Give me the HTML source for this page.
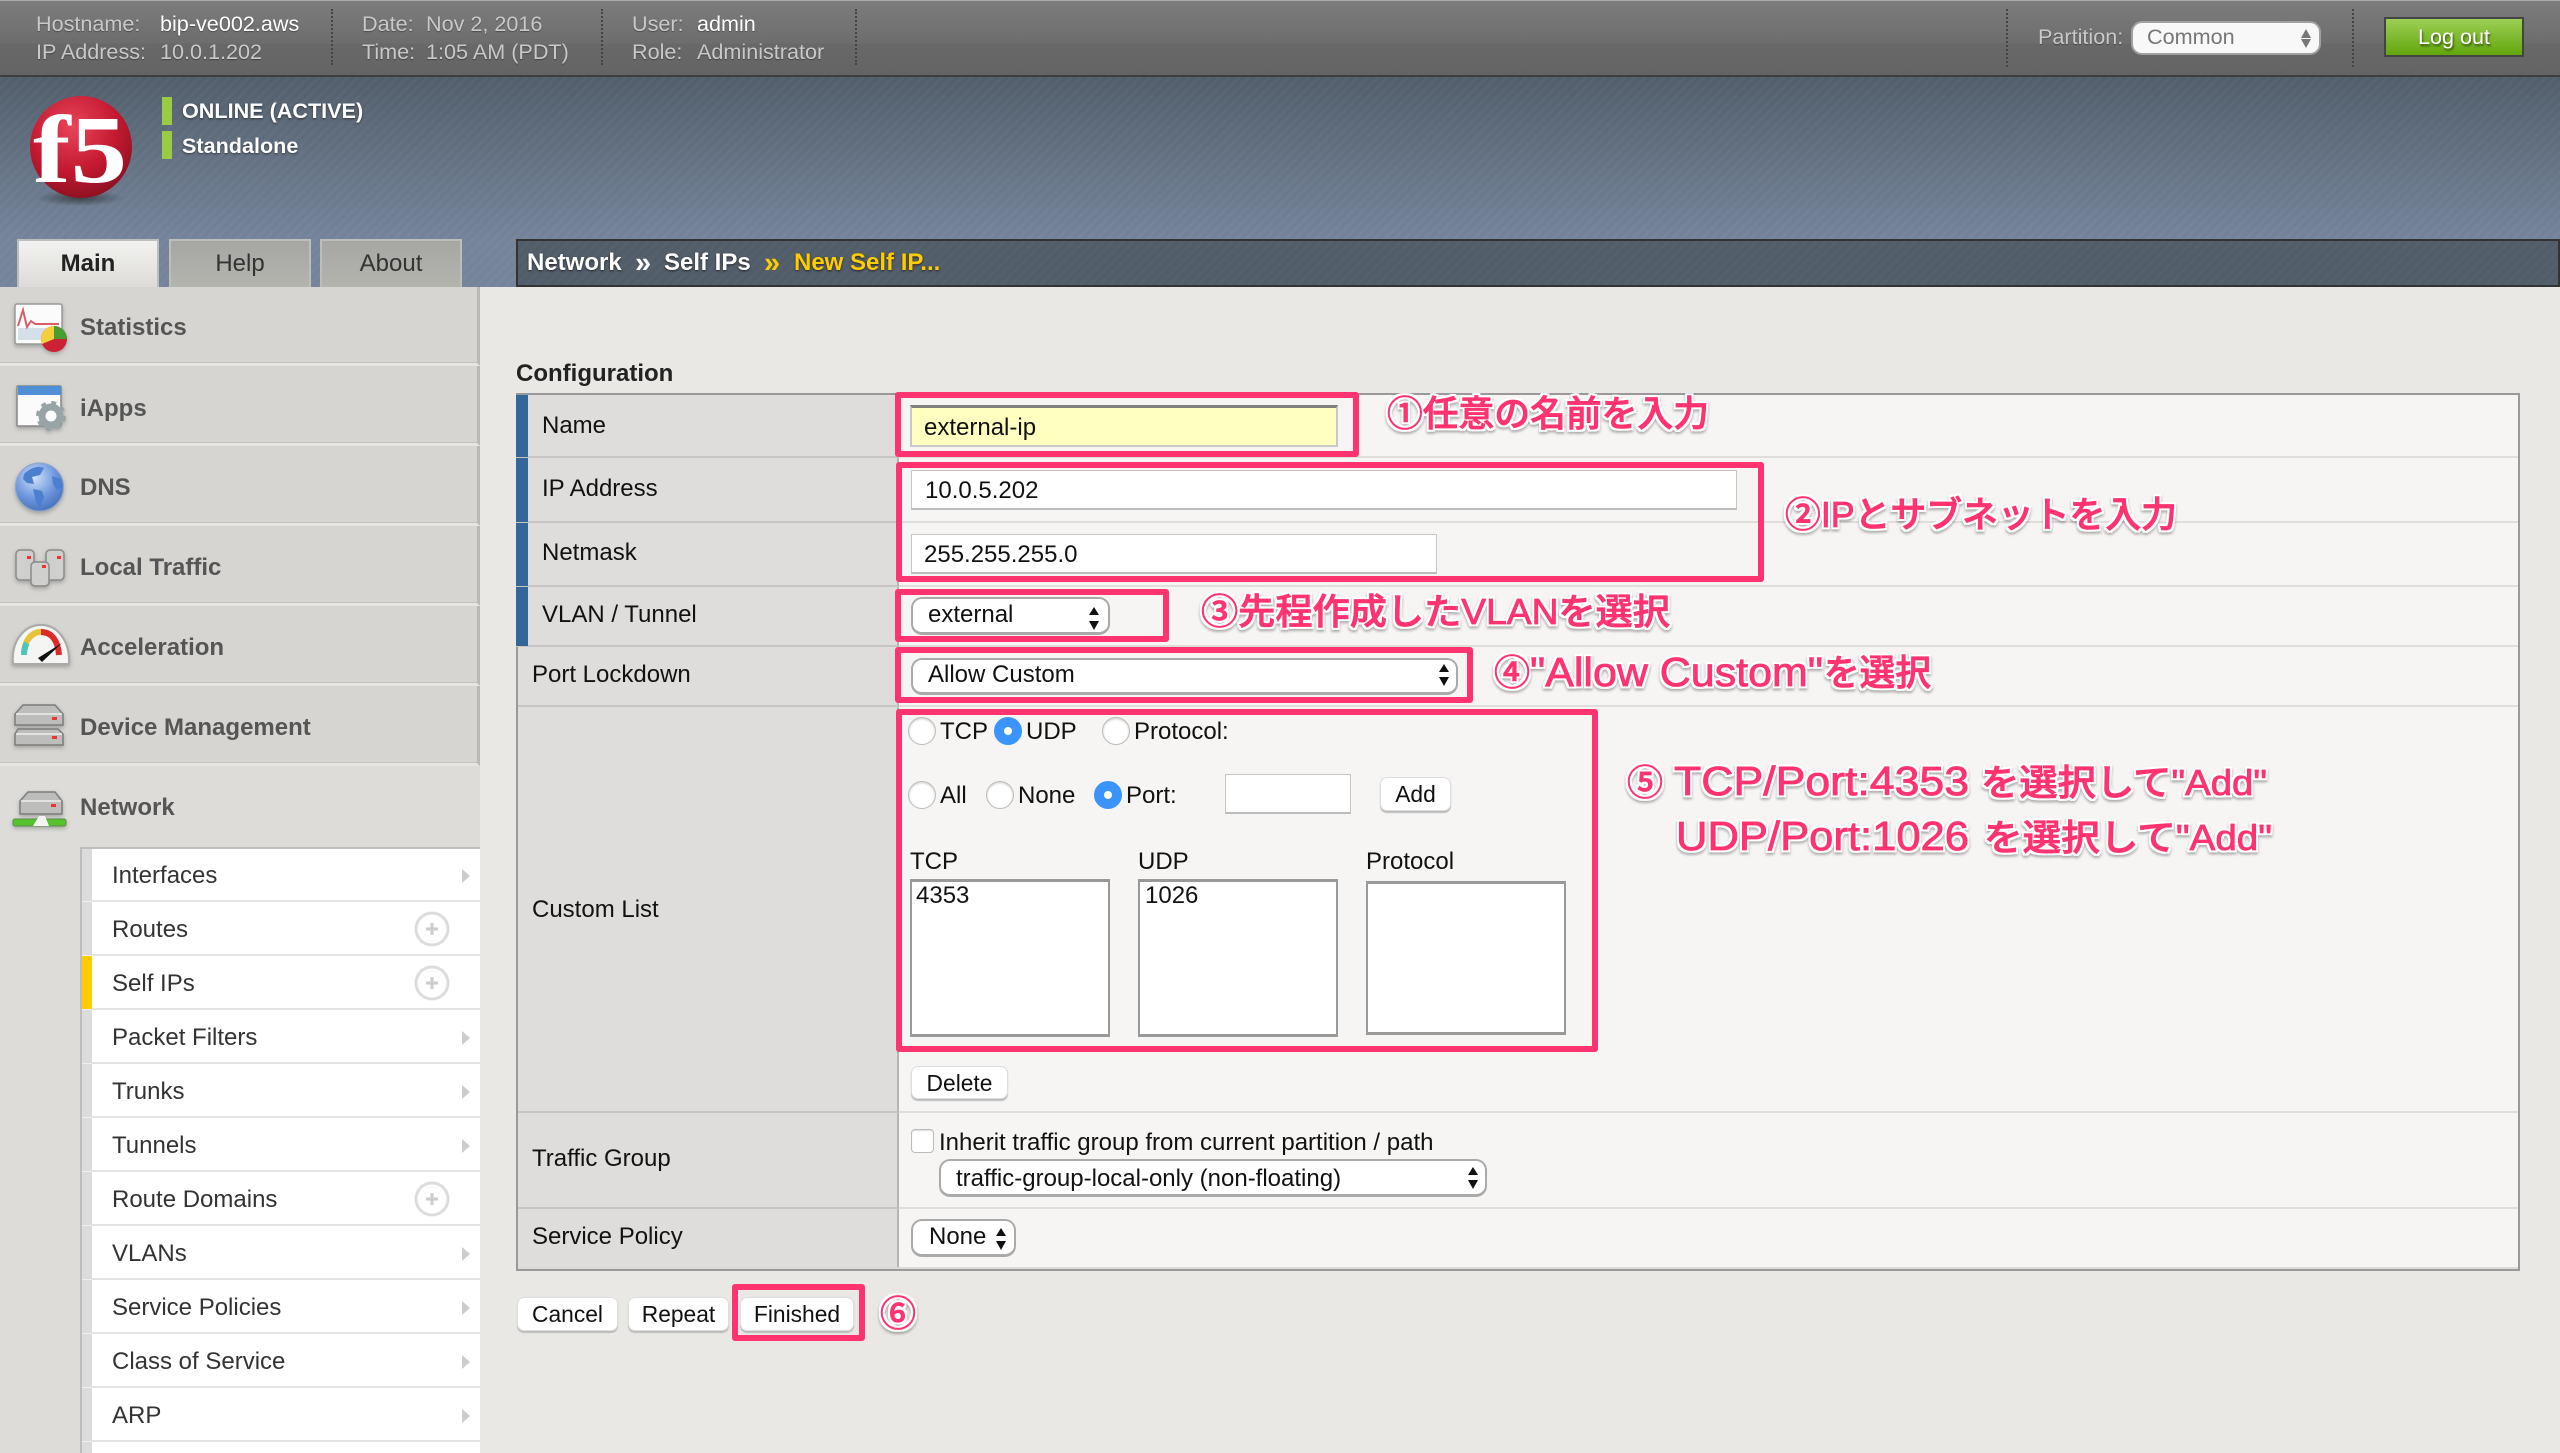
<!DOCTYPE html>
<html lang="ja"><head><meta charset="utf-8"><title>BIG-IP New Self IP</title>
<style>
html,body{margin:0;padding:0}
body{width:2560px;height:1453px;overflow:hidden;position:relative;background:#e9e8e4;font-family:"Liberation Sans","Noto Sans CJK JP",sans-serif;font-size:24px;color:#111}
div,span.a{position:absolute;box-sizing:border-box}
.t{white-space:nowrap;height:24px;line-height:24px;margin-top:1px}
.h{font-size:21.6px;color:#c9c9c9;text-shadow:0 1px 1px rgba(0,0,0,.35);margin-top:0}
.w{color:#fff}
.side{left:0;width:480px;height:80px;background:#d6d5d1;border-bottom:3px solid #e6e5e2;border-right:3px solid #b9b9b6;box-shadow:inset 0 -1px 0 #c4c3bf}
.sl{left:80px;font-weight:bold;color:#555;margin-top:2px}
.sub{left:92px;width:388px;height:54px;background:#fff;border-bottom:2px solid #e4e4e4}
.sst{left:82px;width:10px;height:54px;background:#dcdcdc;border-bottom:1px solid #eee}
.st{left:112px;color:#333;margin-top:2px}
.arr{left:462px;width:0;height:0;border-left:8px solid #ccc;border-top:7px solid transparent;border-bottom:7px solid transparent}
.lc{left:518px;width:381px;background:#dedddb;border-bottom:2px solid #c6c5c1;border-right:2px solid #b5b5b2}
.rc{left:899px;width:1619px;background:#f6f5f3;border-bottom:2px solid #dfdedb}
.blue{left:516px;width:12px;background:#336699;border-bottom:1px solid #c6c5c1}
.in{background:#fff;border:1px solid #c6c6c6;border-bottom:2px solid #bbb}
.sel{background:#fff;border:2px solid #aaa;border-bottom-width:3px;border-radius:11px}
.btn{background:#fff;border:1px solid #ddd;border-radius:7px;box-shadow:0 2px 1px #bbb;text-align:center;font-size:22.8px;line-height:33px;color:#111}
.rad{width:28px;height:28px;border-radius:50%;background:#fff;border:1px solid #bbb;box-shadow:inset 0 1px 2px #ccc}
.on{background:#3a94fb;border-color:#3a94fb;box-shadow:none}
.on:after{content:"";position:absolute;left:9px;top:9px;width:8px;height:8px;background:#fff;border-radius:50%}
.lst{background:#fff;border:2px solid #999;border-top-width:3px;border-bottom-width:3px}
.pk{border:6px solid #ff3370;border-radius:3px}
.tab{top:239px;height:48px;width:142px;border:2px solid #bdbdb9;border-bottom:0;background:linear-gradient(#a6a7a3,#b3b4ae);text-align:center;line-height:45px;color:#333}
.ann{font-family:"Liberation Sans","Noto Sans CJK JP",sans-serif;font-size:36px;font-weight:500;fill:#ff3370;stroke:#ff3370;stroke-width:.8px;filter:url(#halo)}
.lat{font-size:41px;font-weight:400}
</style></head><body>

<!-- top bar -->
<div style="left:0;top:0;width:2560px;height:77px;background:linear-gradient(#7c7c7c 2%,#6d6d6d 57%,#686868 58%,#646464);border-top:1px solid #aaa;border-bottom:2px solid #3e3e3e"></div>
<div style="left:331px;top:9px;width:0;height:56px;border-left:2px dotted #444"></div>
<div style="left:601px;top:9px;width:0;height:56px;border-left:2px dotted #444"></div>
<div style="left:855px;top:9px;width:0;height:56px;border-left:2px dotted #444"></div>
<div style="left:2006px;top:9px;width:0;height:58px;border-left:2px dotted #444"></div>
<div style="left:2352px;top:9px;width:0;height:58px;border-left:2px dotted #444"></div>
<div class="t h" style="left:36px;top:12px">Hostname:</div><div class="t h w" style="left:160px;top:12px">bip-ve002.aws</div>
<div class="t h" style="left:36px;top:40px">IP Address:</div><div class="t h" style="left:160px;top:40px">10.0.1.202</div>
<div class="t h" style="left:362px;top:12px">Date:</div><div class="t h" style="left:426px;top:12px">Nov 2, 2016</div>
<div class="t h" style="left:362px;top:40px">Time:</div><div class="t h" style="left:426px;top:40px">1:05 AM (PDT)</div>
<div class="t h" style="left:632px;top:12px">User:</div><div class="t h w" style="left:697px;top:12px">admin</div>
<div class="t h" style="left:632px;top:40px">Role:</div><div class="t h" style="left:697px;top:40px">Administrator</div>
<div class="t h" style="left:2038px;top:25px">Partition:</div>
<div style="left:2131px;top:21px;width:190px;height:34px;background:#f8f8f8;border:2px solid #a0a0a0;border-radius:11px"></div>
<div class="t" style="left:2147px;top:25px;margin-top:0;font-size:21.6px;color:#777">Common</div>
<div style="left:2384px;top:17px;width:140px;height:40px;background:linear-gradient(#9ccf55,#62a60c);border:2px solid #444"></div>
<div class="t" style="left:2384px;width:140px;top:25px;margin-top:0;text-align:center;font-size:21.6px;color:#fff;text-shadow:1px 2px 2px rgba(0,0,0,.55)">Log out</div>

<!-- header band -->
<div style="left:0;top:77px;width:2560px;height:210px;background:repeating-linear-gradient(135deg,rgba(255,255,255,.018) 0 3px,rgba(0,0,0,.012) 3px 7px),linear-gradient(#535f6c,#75859b 77%,#75859b)"></div>
<div style="left:162px;top:97px;width:10px;height:28px;background:#9c4"></div>
<div style="left:162px;top:131px;width:10px;height:28px;background:#9c4"></div>
<div class="t" style="left:182px;top:98px;font-size:21.6px;font-weight:bold;color:#fff;text-shadow:0 1px 2px rgba(0,0,0,.5)">ONLINE (ACTIVE)</div>
<div class="t" style="left:182px;top:133px;font-size:21.6px;font-weight:bold;color:#fff;text-shadow:0 1px 2px rgba(0,0,0,.5)">Standalone</div>

<!-- f5 logo -->
<svg style="position:absolute;left:20px;top:90px" width="124" height="124" viewBox="20 90 124 124">
<defs>
<radialGradient id="rd" cx=".42" cy=".3" r=".8"><stop offset="0" stop-color="#e8455a"/><stop offset=".55" stop-color="#c3182f"/><stop offset="1" stop-color="#7d0f1d"/></radialGradient>
<radialGradient id="sh"><stop offset="0" stop-color="#222" stop-opacity=".65"/><stop offset="1" stop-color="#222" stop-opacity="0"/></radialGradient>
<radialGradient id="gl" cx=".4" cy=".3" r=".8"><stop offset="0" stop-color="#cfe0f8"/><stop offset=".55" stop-color="#6c96dd"/><stop offset="1" stop-color="#3e68b5"/></radialGradient>
</defs>
<ellipse cx="80" cy="198" rx="44" ry="8" fill="url(#sh)"/>
<ellipse cx="81" cy="147" rx="51" ry="51" fill="url(#rd)"/>
<text x="33" y="182" font-family="Liberation Serif" font-weight="bold" font-size="96" fill="#fff" textLength="94" lengthAdjust="spacingAndGlyphs">f5</text>
</svg>

<!-- tabs -->
<div class="tab" style="left:17px;width:142px;background:linear-gradient(#f2f2f0,#dddcd8);font-weight:bold;color:#222">Main</div>
<div class="tab" style="left:169px">Help</div>
<div class="tab" style="left:320px">About</div>
<div style="left:516px;top:239px;width:2044px;height:48px;background:repeating-linear-gradient(135deg,rgba(255,255,255,.018) 0 3px,transparent 3px 7px),#525d6a;border:2px solid #333"></div>
<div class="t" style="left:527px;top:250px;font-weight:bold;color:#fff;text-shadow:0 1px 2px #222">Network</div>
<div class="t" style="left:635px;top:250px;font-weight:bold;font-size:29px;color:#fff">»</div>
<div class="t" style="left:664px;top:250px;font-weight:bold;color:#fff;text-shadow:0 1px 2px #222">Self IPs</div>
<div class="t" style="left:764px;top:250px;font-weight:bold;font-size:29px;color:#fc0">»</div>
<div class="t" style="left:794px;top:250px;font-weight:bold;color:#fc0;text-shadow:0 1px 2px #222">New Self IP...</div>

<!-- sidebar -->
<div style="left:0;top:287px;width:480px;height:1166px;background:#dddcd8"></div>
<div class="side" style="top:287px;height:79px"></div>
<div class="side" style="top:366px"></div>
<div class="side" style="top:446px"></div>
<div class="side" style="top:526px"></div>
<div class="side" style="top:606px"></div>
<div class="side" style="top:686px"></div>
<div class="t sl" style="top:314px">Statistics</div>
<div class="t sl" style="top:395px">iApps</div>
<div class="t sl" style="top:474px">DNS</div>
<div class="t sl" style="top:554px">Local Traffic</div>
<div class="t sl" style="top:634px">Acceleration</div>
<div class="t sl" style="top:714px">Device Management</div>
<div class="t sl" style="top:794px">Network</div>

<svg style="position:absolute;left:0;top:290px;filter:drop-shadow(0 2px 2px rgba(0,0,0,.25))" width="90" height="560" viewBox="0 290 90 560">
<!-- statistics -->
<rect x="15" y="304" width="47" height="40" rx="2" fill="#fbfbfb" stroke="#999" stroke-width="1.5"/>
<rect x="18" y="328" width="41" height="12" fill="#d4dfe9"/>
<path d="M18 326L23 310 27 327 31 321 35 324 59 324" fill="none" stroke="#d5606a" stroke-width="2"/>
<circle cx="54" cy="339" r="13" fill="#cc2236"/>
<path d="M54 339L54 326A13 13 0 0 1 67 339Z" fill="#4a9d33"/>
<path d="M54 339L54 326A13 13 0 0 0 42 344Z" fill="#f2cf3c"/>
<!-- iApps -->
<rect x="17" y="386" width="44" height="40" rx="1" fill="#fbfbfb" stroke="#888" stroke-width="1.5"/>
<rect x="18" y="386" width="43" height="9" fill="#4f8fd6"/>
<circle cx="51" cy="416" r="9" fill="none" stroke="#98a4a6" stroke-width="7"/>
<circle cx="51" cy="416" r="13.500" fill="none" stroke="#98a4a6" stroke-width="3" stroke-dasharray="5 5.600"/>
<!-- DNS -->
<circle cx="39.500" cy="487" r="24" fill="url(#gl)" stroke="#8ea6c8"/>
<path d="M24 474c6-6 14-9 20-6l-4 7-8 2 2 7-7-1-4-4zM33 489l9 2 2 6-4 11-4-6zM52 476l9 3 2 8-6 3-4-6z" fill="#4d7fd0"/>
<!-- Local traffic -->
<g fill="#cfcfcd" stroke="#8a8a8a" stroke-width="1.5">
<rect x="16" y="550" width="18" height="30" rx="4"/><rect x="46" y="550" width="18" height="30" rx="4"/><rect x="31" y="562" width="18" height="24" rx="4"/>
</g>
<g fill="#e33"><rect x="27" y="556" width="4" height="3"/><rect x="57" y="556" width="4" height="3"/><rect x="42" y="565" width="4" height="3"/></g>
<!-- Acceleration -->
<path d="M13 664c-2-24 12-39 28-39s29 15 28 39z" fill="#f5f5f3" stroke="#aaa" stroke-width="2"/>
<path d="M24 655c0-15 8-23 17-23" fill="none" stroke="#e8c23c" stroke-width="6"/>
<path d="M24 655c0-5 1-9 3-12" fill="none" stroke="#4cc5bd" stroke-width="6"/>
<path d="M41 632c11 0 17 9 18 23" fill="none" stroke="#dc2b26" stroke-width="6"/>
<path d="M38 658L62 643 42 662z" fill="#111"/>
<!-- Device Mgmt -->
<g fill="#bdbdbb" stroke="#7d7d7d" stroke-width="1.500">
<path d="M15 725v-11l8-9h32l8 9v11z"/><path d="M15 745v-11l3-5h40l5 5v11z"/>
</g>
<path d="M16 714h46M16 734h46" stroke="#eee" stroke-width="1.5"/>
<g fill="#e33"><rect x="52" y="717" width="5" height="3"/><rect x="52" y="736" width="5" height="3"/></g>
<!-- Network -->
<path d="M20 814v-13l8-9h27l7 9v13z" fill="#bdbdbb" stroke="#7d7d7d" stroke-width="1.5"/>
<path d="M21 801h40" stroke="#eee" stroke-width="1.500"/>
<rect x="51" y="804" width="5" height="3" fill="#e33"/>
<rect x="13" y="819" width="53" height="7" rx="2" fill="#55c32e" stroke="#5d8c4a"/>
<path d="M33 826l6-10 6 0 4 10z" fill="#f4f4f4"/>
</svg>

<!-- sub menu -->
<div style="left:80px;top:847px;width:400px;height:2px;background:#bdbdbb"></div>
<div style="left:80px;top:847px;width:2px;height:606px;background:#bdbdbb"></div>
<div class="sub" style="top:849px;height:53px"></div><div class="sst" style="top:849px;height:53px"></div>
<div class="sub" style="top:902px"></div><div class="sst" style="top:902px"></div>
<div class="sub" style="top:956px"></div><div class="sst" style="top:956px;background:#fc0"></div>
<div class="sub" style="top:1010px"></div><div class="sst" style="top:1010px"></div>
<div class="sub" style="top:1064px"></div><div class="sst" style="top:1064px"></div>
<div class="sub" style="top:1118px"></div><div class="sst" style="top:1118px"></div>
<div class="sub" style="top:1172px"></div><div class="sst" style="top:1172px"></div>
<div class="sub" style="top:1226px"></div><div class="sst" style="top:1226px"></div>
<div class="sub" style="top:1280px"></div><div class="sst" style="top:1280px"></div>
<div class="sub" style="top:1334px"></div><div class="sst" style="top:1334px"></div>
<div class="sub" style="top:1388px"></div><div class="sst" style="top:1388px"></div>
<div class="sub" style="top:1442px;height:11px;border:0"></div><div class="sst" style="top:1442px;height:11px;border:0"></div>
<div class="t st" style="top:862px">Interfaces</div><div class="arr" style="top:869px"></div>
<div class="t st" style="top:916px">Routes</div>
<div class="t st" style="top:970px">Self IPs</div>
<div class="t st" style="top:1024px">Packet Filters</div><div class="arr" style="top:1031px"></div>
<div class="t st" style="top:1078px">Trunks</div><div class="arr" style="top:1085px"></div>
<div class="t st" style="top:1132px">Tunnels</div><div class="arr" style="top:1139px"></div>
<div class="t st" style="top:1186px">Route Domains</div>
<div class="t st" style="top:1240px">VLANs</div><div class="arr" style="top:1247px"></div>
<div class="t st" style="top:1294px">Service Policies</div><div class="arr" style="top:1301px"></div>
<div class="t st" style="top:1348px">Class of Service</div><div class="arr" style="top:1355px"></div>
<div class="t st" style="top:1402px">ARP</div><div class="arr" style="top:1409px"></div>
<svg style="position:absolute;left:410px;top:900px" width="44" height="320" viewBox="410 900 44 320">
<g fill="#fff" stroke="#ddd" stroke-width="3"><circle cx="432" cy="929" r="16"/><circle cx="432" cy="983" r="16"/><circle cx="432" cy="1199" r="16"/></g>
<g stroke="#ccc" stroke-width="3"><path d="M426 929h12M432 923v12M426 983h12M432 977v12M426 1199h12M432 1193v12"/></g>
</svg>

<!-- main config -->
<div class="t" style="left:516px;top:361px;font-weight:bold;color:#222">Configuration</div>
<div style="left:516px;top:393px;width:2004px;height:878px;border:2px solid #999;background:#f6f5f3"></div>
<div class="lc" style="top:395px;height:63px"></div><div class="rc" style="top:395px;height:63px"></div>
<div class="lc" style="top:458px;height:65px"></div><div class="rc" style="top:458px;height:65px"></div>
<div class="lc" style="top:523px;height:64px"></div><div class="rc" style="top:523px;height:64px"></div>
<div class="lc" style="top:587px;height:60px"></div><div class="rc" style="top:587px;height:60px"></div>
<div class="lc" style="top:647px;height:60px"></div><div class="rc" style="top:647px;height:60px"></div>
<div class="lc" style="top:707px;height:406px"></div><div class="rc" style="top:707px;height:406px"></div>
<div class="lc" style="top:1113px;height:96px"></div><div class="rc" style="top:1113px;height:96px"></div>
<div class="lc" style="top:1209px;height:60px;border-bottom-color:#d8d7d4"></div><div class="rc" style="top:1209px;height:60px"></div>
<div class="blue" style="top:395px;height:63px"></div><div class="blue" style="top:458px;height:65px"></div><div class="blue" style="top:523px;height:64px"></div><div class="blue" style="top:587px;height:60px"></div>
<div class="t" style="left:542px;top:413px">Name</div>
<div class="t" style="left:542px;top:476px">IP Address</div>
<div class="t" style="left:542px;top:540px">Netmask</div>
<div class="t" style="left:542px;top:602px">VLAN / Tunnel</div>
<div class="t" style="left:532px;top:662px">Port Lockdown</div>
<div class="t" style="left:532px;top:897px">Custom List</div>
<div class="t" style="left:532px;top:1146px">Traffic Group</div>
<div class="t" style="left:532px;top:1224px">Service Policy</div>

<div style="left:910px;top:405px;width:428px;height:42px;background:#ffffc0;border:2px solid #c8c8c8;border-top:3px solid #808080"></div>
<div class="t" style="left:924px;top:415px">external-ip</div>
<div class="in" style="left:911px;top:470px;width:826px;height:40px"></div>
<div class="t" style="left:925px;top:478px">10.0.5.202</div>
<div class="in" style="left:911px;top:534px;width:526px;height:40px"></div>
<div class="t" style="left:924px;top:542px">255.255.255.0</div>
<div class="sel" style="left:911px;top:597px;width:199px;height:38px"></div>
<div class="t" style="left:928px;top:602px">external</div>
<div class="sel" style="left:911px;top:658px;width:547px;height:37px"></div>
<div class="t" style="left:928px;top:662px">Allow Custom</div>

<div class="rad" style="left:908px;top:717px"></div><div class="t" style="left:940px;top:719px">TCP</div>
<div class="rad on" style="left:994px;top:717px"></div><div class="t" style="left:1026px;top:719px">UDP</div>
<div class="rad" style="left:1102px;top:717px"></div><div class="t" style="left:1134px;top:719px">Protocol:</div>
<div class="rad" style="left:908px;top:781px"></div><div class="t" style="left:940px;top:783px">All</div>
<div class="rad" style="left:986px;top:781px"></div><div class="t" style="left:1018px;top:783px">None</div>
<div class="rad on" style="left:1094px;top:781px"></div><div class="t" style="left:1126px;top:783px">Port:</div>
<div class="in" style="left:1225px;top:774px;width:126px;height:40px"></div>
<div class="btn" style="left:1380px;top:777px;width:71px;height:34px">Add</div>
<div class="t" style="left:910px;top:849px">TCP</div>
<div class="t" style="left:1138px;top:849px">UDP</div>
<div class="t" style="left:1366px;top:849px">Protocol</div>
<div class="lst" style="left:910px;top:879px;width:200px;height:158px"></div>
<div class="lst" style="left:1138px;top:879px;width:200px;height:158px"></div>
<div class="lst" style="left:1366px;top:881px;width:200px;height:154px"></div>
<div class="t" style="left:916px;top:883px">4353</div>
<div class="t" style="left:1145px;top:883px">1026</div>
<div class="btn" style="left:911px;top:1066px;width:97px;height:33px">Delete</div>

<div style="left:911px;top:1129px;width:23px;height:24px;background:#fff;border:1px solid #bbb;border-radius:4px;box-shadow:inset 0 1px 1px #ddd"></div>
<div class="t" style="left:939px;top:1130px">Inherit traffic group from current partition / path</div>
<div class="sel" style="left:939px;top:1159px;width:548px;height:38px"></div>
<div class="t" style="left:956px;top:1166px">traffic-group-local-only (non-floating)</div>
<div class="sel" style="left:911px;top:1219px;width:105px;height:38px"></div>
<div class="t" style="left:929px;top:1224px">None</div>

<div style="left:518px;top:1267px;width:2000px;height:2px;background:#dcdbd8"></div>
<div class="btn" style="left:517px;top:1297px;width:101px;height:34px">Cancel</div>
<div class="btn" style="left:628px;top:1297px;width:101px;height:34px">Repeat</div>
<div class="btn" style="left:740px;top:1297px;width:114px;height:34px">Finished</div>

<!-- pink boxes -->
<div class="pk" style="left:895px;top:392px;width:464px;height:65px"></div>
<div class="pk" style="left:896px;top:462px;width:868px;height:120px"></div>
<div class="pk" style="left:895px;top:589px;width:274px;height:53px"></div>
<div class="pk" style="left:895px;top:647px;width:578px;height:56px"></div>
<div class="pk" style="left:896px;top:709px;width:702px;height:343px"></div>
<div class="pk" style="left:732px;top:1284px;width:133px;height:57px"></div>

<svg style="position:absolute;left:0;top:0" width="2560" height="1453" viewBox="0 0 2560 1453">
<defs>
<filter id="halo" x="-8%" y="-30%" width="116%" height="170%" color-interpolation-filters="sRGB">
<feMorphology in="SourceAlpha" operator="dilate" radius="2" result="d"/>
<feFlood flood-color="#fff"/><feComposite in2="d" operator="in" result="w"/>
<feOffset in="d" dy="2" result="o"/><feGaussianBlur in="o" stdDeviation="1.2" result="b"/>
<feFlood flood-color="#000" flood-opacity=".3"/><feComposite in2="b" operator="in" result="s"/>
<feMerge><feMergeNode in="s"/><feMergeNode in="w"/><feMergeNode in="SourceGraphic"/></feMerge>
</filter>
</defs>
<!-- select arrows -->
<g fill="#111">
<path d="M1094 607l-5 8h10zM1094 630l-5-9h10z"/>
<path d="M1444 664l-5 8h10zM1444 686l-5-9h10z"/>
<path d="M1473 1167l-5 8h10zM1473 1189l-5-9h10z"/>
<path d="M1001 1228l-5 8h10zM1001 1250l-5-9h10z"/>
</g>
<path d="M2306 29l-5 9h10zM2306 48l-5-9h10z" fill="#777"/>
<text class="ann" x="1387" y="426" textLength="322" lengthAdjust="spacingAndGlyphs">①任意の名前を入力</text>
<text class="ann" x="1785" y="527" textLength="392" lengthAdjust="spacingAndGlyphs">②IPとサブネットを入力</text>
<text class="ann" x="1201" y="624" textLength="469" lengthAdjust="spacingAndGlyphs">③先程作成したVLANを選択</text>
<text class="ann" x="1494" y="685">④</text>
<text class="ann lat" x="1530" y="686" textLength="293" lengthAdjust="spacingAndGlyphs">"Allow Custom"</text>
<text class="ann" x="1824" y="685" textLength="107" lengthAdjust="spacingAndGlyphs">を選択</text>
<text class="ann" x="1627" y="795">⑤</text>
<text class="ann lat" x="1674" y="795" textLength="295" lengthAdjust="spacingAndGlyphs">TCP/Port:4353</text>
<text class="ann" x="1981" y="795" textLength="286" lengthAdjust="spacingAndGlyphs">を選択して"Add"</text>
<text class="ann lat" x="1676" y="850" textLength="293" lengthAdjust="spacingAndGlyphs">UDP/Port:1026</text>
<text class="ann" x="1984" y="850" textLength="288" lengthAdjust="spacingAndGlyphs">を選択して"Add"</text>
<text class="ann" x="880" y="1326">⑥</text>
</svg>
</body></html>
